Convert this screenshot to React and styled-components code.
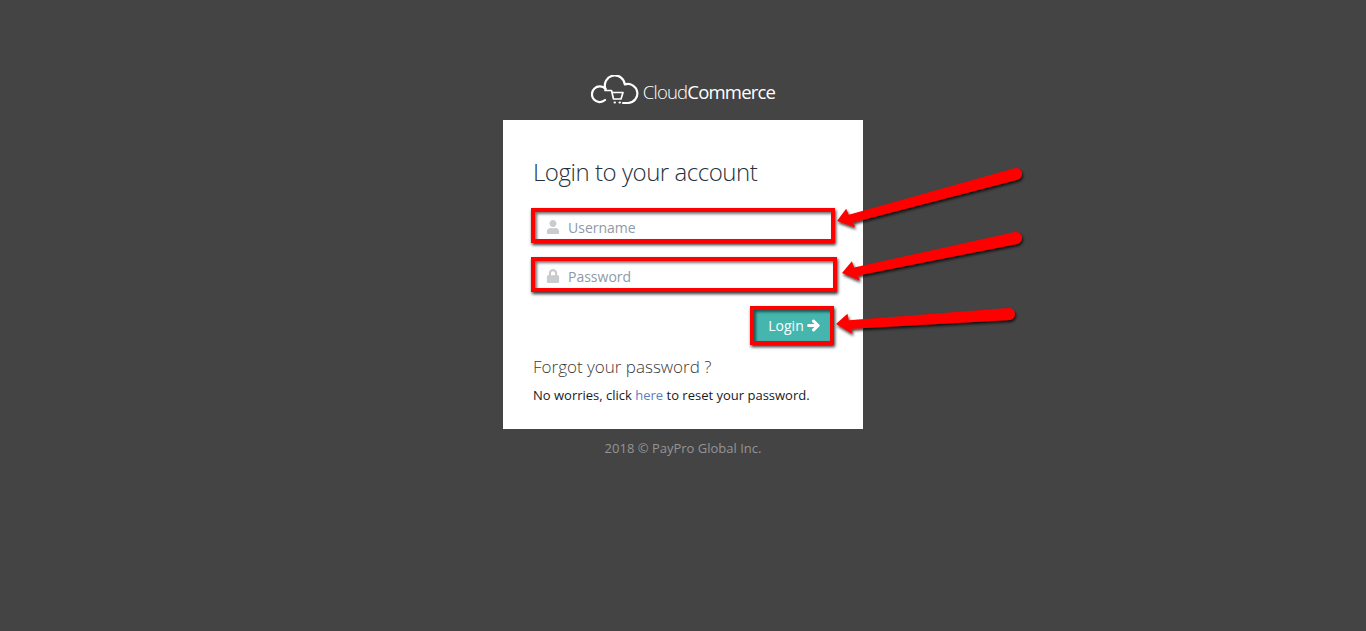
import React from "react";
import styled, { createGlobalStyle } from "styled-components";
import { FaUser, FaLock, FaArrowRight } from "react-icons/fa";

const GlobalStyle = createGlobalStyle`
  html, body {
    margin: 0;
    height: 100%;
    background: #444444;
    font-family: "Open Sans", "Liberation Sans", sans-serif;
  }
`;

const Page = styled.div`
  position: relative;
  min-height: 631px;
  overflow: hidden;
  display: flex;
  flex-direction: column;
  align-items: center;
  padding-top: 75px;
  box-sizing: border-box;
`;

const Logo = styled.div`
  display: flex;
  align-items: center;
  height: 32px;
  margin-bottom: 13px;
  color: #fff;
`;

const LogoText = styled.span`
  margin-left: 3px;
  margin-top: 1px;
  font-size: 18.5px;
  letter-spacing: -0.8px;
  font-weight: 300;
  b {
    font-weight: 400;
  }
`;

const Card = styled.div`
  width: 360px;
  height: 309px;
  box-sizing: border-box;
  background: #fff;
  padding: 35px 30px 0;
`;

const Title = styled.h3`
  margin: 0 0 20px;
  font-size: 24px;
  line-height: 33px;
  letter-spacing: -0.45px;
  font-weight: 300;
  color: #26313c;
`;

const Field = styled.div`
  display: flex;
  align-items: center;
  box-sizing: border-box;
  width: ${(p) => p.$width}px;
  height: 35px;
  margin: 0 0 14px -2px;
  padding: 4px 0 0 11px;
  border: 4px solid #ff0000;
  box-shadow: 1px 2px 3px rgba(0, 0, 0, 0.8), inset 2px 2px 3px rgba(0, 0, 0, 0.55);
  font-size: 14px;
  color: #8e9aa6;
`;

const FieldIcon = styled.span`
  display: flex;
  width: 22px;
  margin-top: -2px;
  color: #c9cccf;
  font-size: 14px;
`;

const Actions = styled.div`
  display: flex;
  justify-content: flex-end;
  margin: 0 -1px 10px 0;
`;

const LoginButton = styled.button`
  display: flex;
  align-items: center;
  justify-content: center;
  gap: 3px;
  box-sizing: border-box;
  width: 84px;
  height: 39px;
  padding: 0 0 0 4px;
  border: 4px solid #ff0000;
  background: #44b6ae;
  color: #fff;
  font-family: inherit;
  font-size: 14px;
  box-shadow: 1px 2px 3px rgba(0, 0, 0, 0.8), inset 2px 2px 3px rgba(0, 0, 0, 0.55);
  svg {
    stroke: currentColor;
    stroke-width: 40px;
  }
`;

const ForgotTitle = styled.h4`
  margin: 0 0 6px;
  font-size: 17px;
  line-height: 24px;
  font-weight: 300;
  color: #3a3a3a;
`;

const ForgotText = styled.p`
  margin: 0;
  font-size: 13px;
  line-height: 20px;
  color: #1a1a1a;
  a {
    color: #5b80c0;
    text-decoration: none;
  }
`;

const Copyright = styled.div`
  margin-top: 10px;
  font-size: 13px;
  line-height: 18px;
  color: #949494;
`;

const Arrows = styled.svg`
  position: absolute;
  inset: 0;
  pointer-events: none;
`;

const CloudLogo = () => (
  <svg width="49" height="32" viewBox="0 0 49 32" fill="none" stroke="#fff" strokeWidth="2.2" strokeLinecap="round" strokeLinejoin="round">
    <path d="M 14.5 14 A 7.8 7.8 0 1 0 14 25" />
    <path d="M 14.5 14 A 10 10 0 1 1 33.8 9.5 A 9.5 9.5 0 1 1 37 28 H 32" />
    <path d="M 14 15.5 H 20.5 L 22.5 24 H 30 L 32 17.5 H 21" strokeWidth="1.7" />
    <path d="M 23.5 27.5 h 0.5 M 28.5 27.5 h 0.5" strokeWidth="2" />
  </svg>
);

const arrows = [
  { tail: [1016, 174], tip: [837, 221] },
  { tail: [1016, 238], tip: [842, 273] },
  { tail: [1009, 314], tip: [836, 324] },
];

const Arrow = ({ tail, tip }) => {
  const len = Math.hypot(tail[0] - tip[0], tail[1] - tip[1]);
  const angle = (Math.atan2(tail[1] - tip[1], tail[0] - tip[0]) * 180) / Math.PI;
  return (
    <g transform={`translate(${tip[0]} ${tip[1]}) rotate(${angle})`}>
      <path
        d={`M 13 -3 L ${len} -6 A 6 6 0 0 1 ${len} 6 L 15 5.5 L 16 11 L 0 0 L 12 -9.5 Z`}
        fill="#ff0000"
      />
    </g>
  );
};

export default function App() {
  return (
    <>
      <GlobalStyle />
      <Page>
        <Logo>
          <CloudLogo />
          <LogoText>
            Cloud<b>Commerce</b>
          </LogoText>
        </Logo>
        <Card>
          <Title>Login to your account</Title>
          <Field $width={304}>
            <FieldIcon>
              <FaUser />
            </FieldIcon>
            Username
          </Field>
          <Field $width={306}>
            <FieldIcon>
              <FaLock />
            </FieldIcon>
            Password
          </Field>
          <Actions>
            <LoginButton>
              Login <FaArrowRight size={13} />
            </LoginButton>
          </Actions>
          <ForgotTitle>Forgot your password ?</ForgotTitle>
          <ForgotText>
            No worries, click <a href="#here">here</a> to reset your password.
          </ForgotText>
        </Card>
        <Copyright>2018 © PayPro Global Inc.</Copyright>
        <Arrows width="1366" height="631">
          <defs>
            <filter id="arrowShadow" x="-10%" y="-50%" width="120%" height="200%">
              <feDropShadow dx="1" dy="2" stdDeviation="1.5" floodColor="#000" floodOpacity="0.8" />
            </filter>
          </defs>
          <g filter="url(#arrowShadow)">
            {arrows.map((a) => (
              <Arrow key={a.tail[1]} tail={a.tail} tip={a.tip} />
            ))}
          </g>
        </Arrows>
      </Page>
    </>
  );
}
